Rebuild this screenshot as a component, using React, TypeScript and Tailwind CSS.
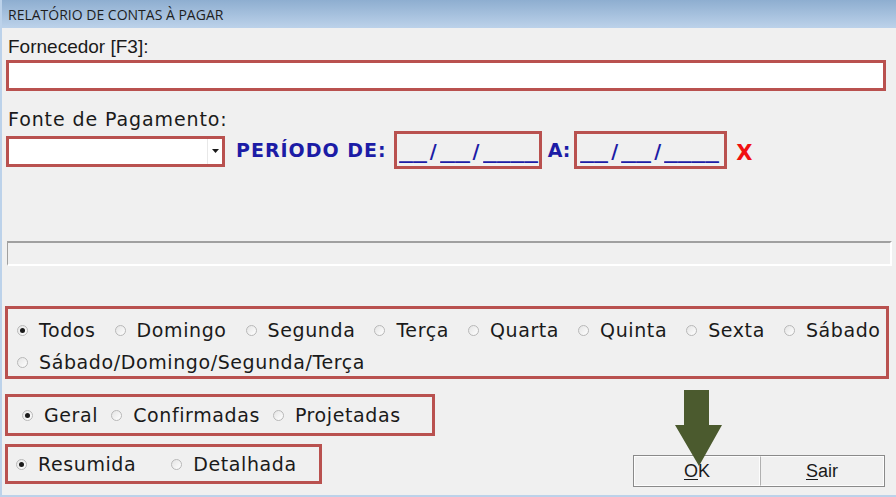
import React from "react";

const verdana = "font-['DejaVu_Sans',Verdana,sans-serif]";

function Radio({ checked }: { checked?: boolean }) {
  return (
    <span className="inline-flex h-[11px] w-[11px] shrink-0 items-center justify-center rounded-full border border-[#b8b8b8] bg-[linear-gradient(135deg,#e4e4e4,#ffffff)]">
      {checked && <span className="h-[5px] w-[5px] rounded-full bg-[#1a1a1a]" />}
    </span>
  );
}

function Option({ label, checked, className = "" }: { label: string; checked?: boolean; className?: string }) {
  return (
    <span className={`inline-flex items-center gap-[11px] ${className}`}>
      <Radio checked={checked} />
      <span>{label}</span>
    </span>
  );
}

// underscores stretched so each group reads as one solid line, like the masked field
function Blank({ w, n }: { w: number; n: number }) {
  return (
    <span className="inline-block tracking-normal" style={{ width: w }}>
      <span className="inline-block origin-left" style={{ transform: `scaleX(${w / (n * 9.5)})` }}>
        {"_".repeat(n)}
      </span>
    </span>
  );
}

function DateMask() {
  return (
    <span className="inline-flex items-end">
      <Blank w={28} n={2} />
      <span className="mx-[3px]">/</span>
      <Blank w={30} n={2} />
      <span className="mx-[3px]">/</span>
      <Blank w={55} n={4} />
    </span>
  );
}

const days = ["Todos", "Domingo", "Segunda", "Terça", "Quarta", "Quinta", "Sexta", "Sábado"];

export default function App() {
  return (
    <div className="relative h-[497px] w-[896px] overflow-hidden border-l-2 border-b-2 border-[#bcd2ea] bg-[#f0f0f0] text-[#1a1a1a]">
      <div className="flex h-[28px] items-center bg-[linear-gradient(180deg,#8eaed0,#bcd2ea)] px-[6px] font-['Open_Sans',sans-serif] text-[14px] text-[#1e1e1e]">
        RELATÓRIO DE CONTAS À PAGAR
      </div>

      <div className="px-[4px]">
        <div className="mt-[7px] pl-[2px] font-['Liberation_Sans',Arial,sans-serif] text-[19px] leading-[23px]">Fornecedor [F3]:</div>
        <div className="mt-[2px] h-[31px] w-[880px] border-[3px] border-[#b9514f] bg-white" />

        <div className={`mt-[17px] pl-[2px] ${verdana} text-[19px] tracking-[0.9px] leading-[23px]`}>Fonte de Pagamento:</div>
        <div className="flex items-center">
          <div className="mt-[2px] flex h-[31px] w-[219px] border-[3px] border-[#b9514f] bg-white">
            <div className="flex-1" />
            <div className="flex w-[15px] items-center justify-center border-l border-[#e8e8e8]">
              <svg width="7" height="4" viewBox="0 0 7 4"><path d="M0 0h7L3.5 4z" fill="#1a1a1a" /></svg>
            </div>
          </div>
          <span className={`ml-[11px] ${verdana} text-[19px] tracking-[1px] font-bold text-[#1c1ca6]`}>PERÍODO DE:</span>
          <div className={`ml-[7px] flex h-[38px] w-[148px] items-end border-[3px] border-[#b9514f] pb-[1px] pl-[2px] ${verdana} text-[19px] font-bold text-[#1c1ca6]`}>
            <DateMask />
          </div>
          <span className={`ml-[6px] ${verdana} text-[19px] font-bold text-[#1c1ca6]`}>A:</span>
          <div className={`ml-[4px] flex h-[38px] w-[153px] items-end border-[3px] border-[#b9514f] pb-[1px] pl-[3px] ${verdana} text-[19px] font-bold text-[#1c1ca6]`}>
            <DateMask />
          </div>
          <span className={`ml-[9px] mt-[6px] ${verdana} text-[21px] font-bold leading-none text-[#f01010]`}>X</span>
        </div>

        <div className="ml-[1px] mt-[72px] h-[25px] w-[885px] border-l border-t-2 border-b-2 border-r-2 border-l-[#a0a0a0] border-t-[#a0a0a0] border-b-white border-r-white" />

        <div className={`ml-[-1px] mt-[40px] h-[73px] w-[884px] border-[3px] border-[#b9514f] pl-[9px] pt-[6px] ${verdana} text-[19px] tracking-[0.6px] leading-[31px]`}>
          <div className="flex">
            {days.map((d, i) => (
              <Option key={d} label={d} checked={i === 0} className={i === 0 ? "" : "ml-[19px]"} />
            ))}
          </div>
          <Option label="Sábado/Domingo/Segunda/Terça" />
        </div>

        <div className={`ml-[-1px] mt-[15px] flex h-[42px] w-[430px] items-center border-[3px] border-[#b9514f] pl-[14px] ${verdana} text-[19px] tracking-[0.6px]`}>
          <Option label="Geral" checked />
          <Option label="Confirmadas" className="ml-[13px]" />
          <Option label="Projetadas" className="ml-[13px]" />
        </div>

        <div className="mt-[8px] flex items-start">
          <div className={`ml-[-1px] flex h-[40px] w-[317px] items-center border-[3px] border-[#b9514f] pl-[8px] ${verdana} text-[19px] tracking-[0.6px]`}>
            <Option label="Resumida" checked />
            <Option label="Detalhada" className="ml-[35px]" />
          </div>
          <div className="ml-[311px] mt-[11px] flex h-[32px] border border-[#8a8a8a] font-['Liberation_Sans',Arial,sans-serif] text-[18px]">
            <div className="flex w-[126px] items-center justify-center border border-[#fdfdfd] bg-[#f0f0f0]">
              <span><span className="underline underline-offset-2">O</span>K</span>
            </div>
            <div className="flex w-[124px] items-center justify-center border border-[#fdfdfd] border-l-[#b0b0b0] bg-[#f0f0f0]">
              <span><span className="underline underline-offset-2">S</span>air</span>
            </div>
          </div>
        </div>
      </div>

      <svg className="absolute left-[672px] top-[389px]" width="50" height="78" viewBox="0 0 50 78">
        <path d="M10 1h25v35h13L25 77 1 36h9z" fill="#4b5a2e" />
      </svg>
    </div>
  );
}
